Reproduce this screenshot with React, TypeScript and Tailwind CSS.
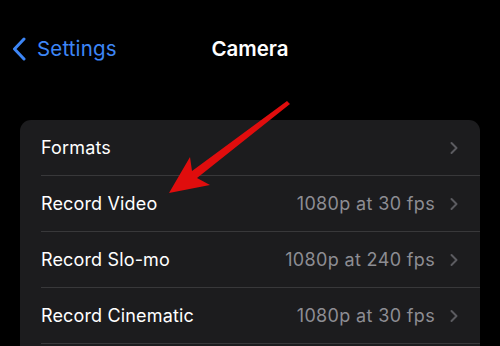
import { ChevronRight } from "lucide-react"

const ROWS = [
  { label: "Formats", value: "" },
  { label: "Record Video", value: "1080p at 30 fps" },
  { label: "Record Slo-mo", value: "1080p at 240 fps" },
  { label: "Record Cinematic", value: "1080p at 30 fps" },
]

export default function App() {
  return (
    <div
      className="relative w-[500px] h-[346px] overflow-hidden bg-black"
      style={{ fontFamily: "Inter, 'Noto Sans', sans-serif" }}
    >
      {/* nav bar */}
      <div className="relative flex items-center h-[96px] pt-[2px]">
        <div className="flex items-center pl-[11px] gap-[10px] text-[#3d86f6]">
          <svg width="16" height="24" viewBox="0 0 16 24" fill="none">
            <path d="M13 2 L3.5 12 L13 22" stroke="currentColor" strokeWidth="3" strokeLinecap="round" strokeLinejoin="round" />
          </svg>
          <span className="text-[20.5px] leading-none tracking-[0.15px]">Settings</span>
        </div>
        <div className="absolute inset-x-0 text-center text-white text-[20.5px] font-semibold leading-none pointer-events-none">
          Camera
        </div>
      </div>

      {/* settings list, continues below the fold */}
      <div className="mx-5 mt-[24px] bg-[#1c1c1e] rounded-[11px] pb-[40px]">
        {ROWS.map((row) => (
          <div key={row.label} className="pl-[21px]">
            <div className="h-[56px] flex items-center border-b border-[#38383a] pr-[20px]">
              <span className="text-white text-[18px] tracking-[0.15px] flex-1">{row.label}</span>
              {row.value && (
                <span className="text-[#8d8d93] text-[18px] tracking-[0.35px]">{row.value}</span>
              )}
              <ChevronRight size={20} strokeWidth={2.4} className="text-[#5b5b60] ml-[9px] -mr-[4px]" />
            </div>
          </div>
        ))}
      </div>

      {/* red pointer arrow */}
      <svg className="absolute inset-0 pointer-events-none" width="500" height="346">
        <polygon
          points="287,101 192,171 190,157 169,193 210,185 197,178 290,104"
          fill="#e00d0d"
        />
      </svg>
    </div>
  )
}
